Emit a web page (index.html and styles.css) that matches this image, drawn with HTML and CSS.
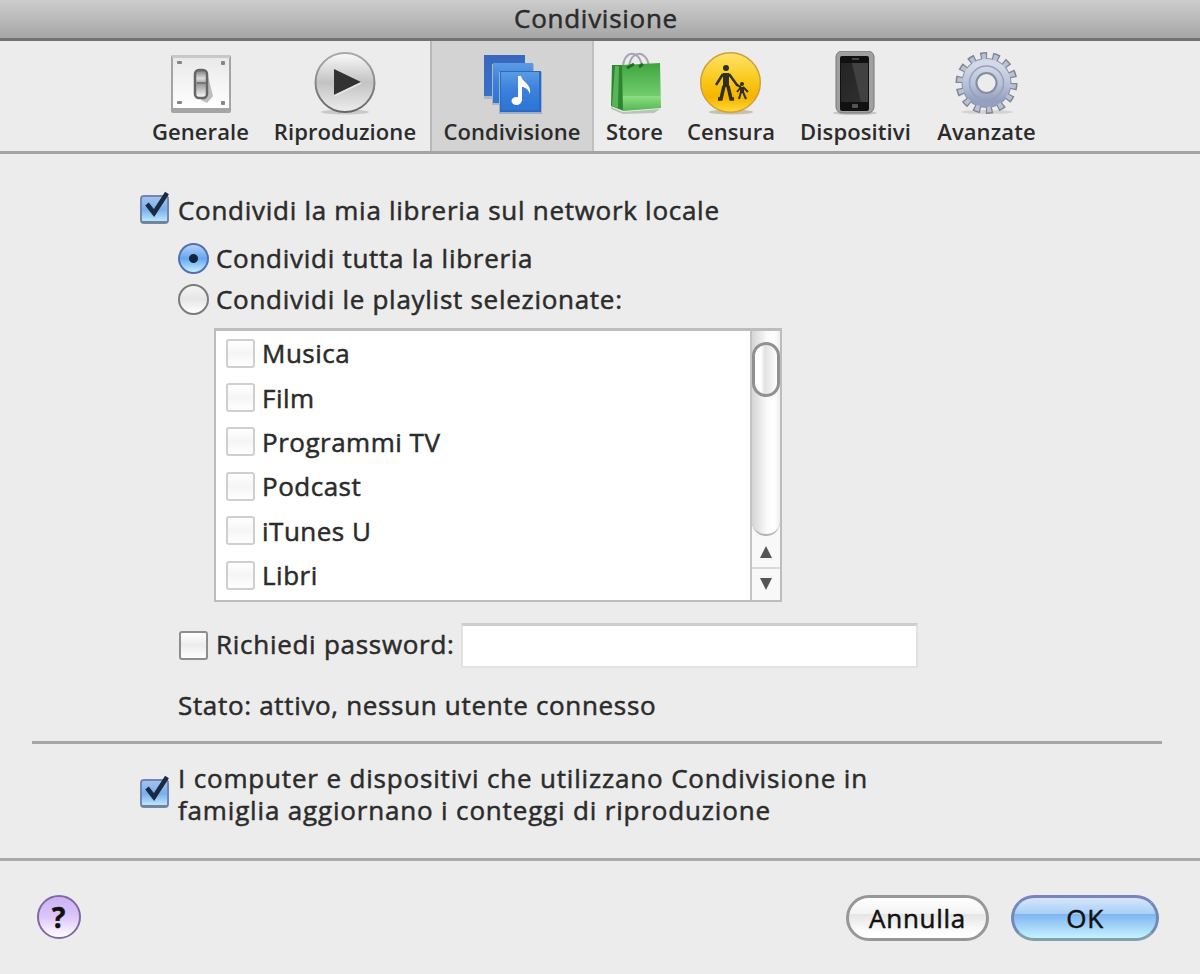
FILE: index.html
```html
<!doctype html>
<html lang="it">
<head>
    <meta charset="utf-8">
    <meta name="viewport" content="width=device-width, initial-scale=1.0">
    <title>Condivisione</title>
    <link rel="stylesheet" href="styles.css">
</head>
<body>
    <header class="titlebar"><span>Condivisione</span></header>

    <nav class="toolbar">
        <div class="tab">
            <svg class="icon" viewBox="0 0 64 64">
                <defs>
                    <linearGradient id="plate" x1="0" y1="0" x2="0" y2="1">
                        <stop offset="0" stop-color="#e9e9e9"/>
                        <stop offset="1" stop-color="#ffffff"/>
                    </linearGradient>
                    <linearGradient id="lever" x1="0" y1="0" x2="0" y2="1">
                        <stop offset="0" stop-color="#777"/>
                        <stop offset=".3" stop-color="#ddd"/>
                        <stop offset=".5" stop-color="#999"/>
                        <stop offset="1" stop-color="#fff"/>
                    </linearGradient>
                </defs>
                <rect x="2" y="4" width="60" height="58" rx="2" fill="#a4a4a4"/>
                <rect x="3" y="4" width="58" height="3" fill="#c8c8c8"/>
                <rect x="4" y="7" width="56" height="50" fill="url(#plate)"/>
                <g fill="#858585">
                    <rect x="8" y="10" width="5" height="3" rx="1"/>
                    <rect x="52" y="10" width="4" height="4" rx="1"/>
                    <rect x="8" y="50" width="5" height="3" rx="1"/>
                    <rect x="52" y="50" width="4" height="4" rx="1"/>
                </g>
                <path d="M32 49l6-28 6 24-6 7z" fill="#bdbdbd"/>
                <rect x="26" y="19" width="12" height="28" rx="4" fill="url(#lever)" stroke="#666" stroke-width="2.5"/>
                <path d="M28 32h9" stroke="#777" stroke-width="2"/>
            </svg>
            <span>Generale</span>
        </div>
        <div class="tab">
            <svg class="icon" viewBox="0 0 64 64">
                <defs>
                    <linearGradient id="ball" x1="0" y1="0" x2="0" y2="1">
                        <stop offset="0" stop-color="#fafafa"/>
                        <stop offset=".5" stop-color="#c3c3c3"/>
                        <stop offset="1" stop-color="#ededed"/>
                    </linearGradient>
                    <linearGradient id="rim" x1="0" y1="0" x2="0" y2="1">
                        <stop offset="0" stop-color="#aaa"/>
                        <stop offset="1" stop-color="#666"/>
                    </linearGradient>
                </defs>
                <ellipse cx="32" cy="61" rx="24" ry="2.5" fill="#c9c9c9"/>
                <circle cx="32" cy="31.5" r="29.5" fill="url(#ball)" stroke="url(#rim)" stroke-width="2"/>
                <path d="M21 18l27 13-27 13z" fill="#333"/>
                <path d="M21 45l27-13" stroke="#e8e8e8" stroke-width="1.5"/>
            </svg>
            <span>Riproduzione</span>
        </div>
        <div class="tab selected">
            <svg class="icon" viewBox="0 0 64 64">
                <defs>
                    <linearGradient id="blue1" x1="0" y1="0" x2="0" y2="1">
                        <stop offset="0" stop-color="#3868bd"/>
                        <stop offset="1" stop-color="#3a70c9"/>
                    </linearGradient>
                    <linearGradient id="blue3" x1="0" y1="0" x2="0" y2="1">
                        <stop offset="0" stop-color="#5c9be4"/>
                        <stop offset=".45" stop-color="#3b82dc"/>
                        <stop offset="1" stop-color="#2c74d6"/>
                    </linearGradient>
                </defs>
                <rect x="4" y="45" width="42" height="3" fill="#b2b5bc"/>
                <rect x="4" y="4" width="41" height="41" fill="url(#blue1)"/>
                <rect x="12" y="13" width="42" height="41" fill="#b2b5bc"/>
                <rect x="13" y="12" width="40" height="40" fill="url(#blue3)"/>
                <rect x="19" y="21" width="43" height="42" fill="#9fafc6"/>
                <rect x="20" y="20" width="41" height="41" fill="#2d69bd"/>
                <rect x="21" y="21" width="38" height="38" fill="url(#blue3)"/>
                <ellipse cx="36.500" cy="50" rx="5" ry="4" fill="#fff"/>
                <path d="M38 50V25h3c1 6 11 8 9 18-2-5-5-7-8-7v14z" fill="#fff"/>
            </svg>
            <span>Condivisione</span>
        </div>
        <div class="tab">
            <svg class="icon" viewBox="0 0 64 64">
                <defs>
                    <linearGradient id="bag" x1="0" y1="0" x2="0" y2="1">
                        <stop offset="0" stop-color="#3fa53f"/>
                        <stop offset=".68" stop-color="#72cc6c"/>
                        <stop offset=".7" stop-color="#8add83"/>
                        <stop offset="1" stop-color="#55b64e"/>
                    </linearGradient>
                </defs>
                <path d="M8 56l12 5 37-3-6 4-31 1-12-5z" fill="#b9c3b8"/>
                <path d="M20 17c0-19 18-19 19 0M26 17c1-19 18-18 20-2" fill="none" stroke="#aaa4b2" stroke-width="2"/>
                <path d="M9 14h12v46L8 55z" fill="#2d862f"/>
                <path d="M12 15l-3 40 6 2 1-42z" fill="#58b458"/>
                <path d="M19 14l38-2 1 45-38 3z" fill="url(#bag)"/>
                <path d="M24 17l7-4M36 16l4-3" stroke="#236a29" stroke-width="3"/>
            </svg>
            <span>Store</span>
        </div>
        <div class="tab">
            <svg class="icon" viewBox="0 0 64 64">
                <defs>
                    <linearGradient id="gold" x1="0" y1="0" x2="0" y2="1">
                        <stop offset="0" stop-color="#ffe36b"/>
                        <stop offset=".45" stop-color="#f9c91c"/>
                        <stop offset=".75" stop-color="#f5b400"/>
                        <stop offset="1" stop-color="#ffdb35"/>
                    </linearGradient>
                </defs>
                <ellipse cx="32" cy="61" rx="22" ry="2.5" fill="#c7c0ae"/>
                <circle cx="31.500" cy="31.500" r="29.8" fill="url(#gold)" stroke="#d0a13a" stroke-width="1.5"/>
                <g fill="none" stroke="#30301c">
                    <circle cx="27" cy="17" r="3" fill="#30301c" stroke="none"/>
                    <path d="M27 22v14" stroke-width="6"/>
                    <path d="M24 23l-7 11M30 23l8 11 4 2" stroke-width="2.5"/>
                    <path d="M25 35l-3 13h-3M29 35l3 13h3" stroke-width="3.5"/>
                    <circle cx="43" cy="33" r="2" fill="#30301c" stroke="none"/>
                    <path d="M43 36v6" stroke-width="4"/>
                    <path d="M42 36l-4 5M44 36l5 5M42 41l-2 7M44 41l3 7" stroke-width="2"/>
                </g>
            </svg>
            <span>Censura</span>
        </div>
        <div class="tab">
            <svg class="icon" viewBox="0 0 64 64">
                <defs>
                    <linearGradient id="screen" x1="0" y1="0" x2="1" y2="1">
                        <stop offset="0" stop-color="#242424"/>
                        <stop offset="1" stop-color="#303030"/>
                    </linearGradient>
                </defs>
                <ellipse cx="31" cy="62" rx="22" ry="2" fill="#c5c5c5"/>
                <rect x="12" y="0" width="38" height="62" rx="6" fill="#a0a0a0" stroke="#777"/>
                <rect x="16" y="5" width="29" height="55" rx="2" fill="#111"/>
                <rect x="17" y="12" width="27" height="39" fill="url(#screen)"/>
                <path d="M28 12h16v39h-7z" fill="#414141"/>
                <rect x="28" y="7" width="7" height="2" fill="#444"/>
                <rect x="28" y="53" width="6" height="4" rx="1" fill="#555"/>
            </svg>
            <span>Dispositivi</span>
        </div>
        <div class="tab">
            <svg class="icon" viewBox="0 0 64 64">
                <defs>
                    <linearGradient id="steel" x1="0" y1="0" x2="0" y2="1">
                        <stop offset="0" stop-color="#d3d9e6"/>
                        <stop offset=".55" stop-color="#b6c1da"/>
                        <stop offset="1" stop-color="#93a0bf"/>
                    </linearGradient>
                </defs>
                <ellipse cx="32" cy="61" rx="26" ry="2" fill="#d3d3d3"/>
                <g fill="none">
                    <circle cx="31.500" cy="32" r="27" stroke="#7f8595" stroke-width="8" pathLength="28" stroke-dasharray="1.1 .9"/>
                    <circle cx="31.500" cy="32" r="18" stroke="#8b92a4" stroke-width="14"/>
                    <circle cx="31.500" cy="32" r="26" stroke="#b9c1d3" stroke-width="7" pathLength="28" stroke-dasharray=".7 1.3" stroke-dashoffset="-.2"/>
                    <circle cx="31.500" cy="32" r="17.5" stroke="url(#steel)" stroke-width="13"/>
                    <circle cx="31.500" cy="32" r="17" stroke="#98a1b8" stroke-width="1.5"/>
                </g>
                <circle cx="31.500" cy="32" r="10" fill="#ececec" stroke="#858c9e" stroke-width="2"/>
            </svg>
            <span>Avanzate</span>
        </div>
    </nav>

    <main class="panel">
        <div class="row share">
            <svg class="check" viewBox="0 0 34 34">
                <defs>
                    <linearGradient id="aqua" x1="0" y1="0" x2="0" y2="1">
                        <stop offset="0" stop-color="#a9c4ee"/>
                        <stop offset=".5" stop-color="#78aeee"/>
                        <stop offset="1" stop-color="#c6f0ff"/>
                    </linearGradient>
                </defs>
                <rect x="3" y="6" width="27" height="27" rx="3" fill="url(#aqua)" stroke="#7286b4" stroke-width="2"/>
                <path d="M3 32h27" stroke="#75838f" stroke-width="2"/>
                <path d="M9 14l7 9L29 3" fill="none" stroke="#1c2940" stroke-width="4.5"/>
            </svg>
            <span>Condividi la mia libreria sul network locale</span>
        </div>
        <div class="row all">
            <span class="radio on"></span>
            <span>Condividi tutta la libreria</span>
        </div>
        <div class="row some">
            <span class="radio"></span>
            <span>Condividi le playlist selezionate:</span>
        </div>

        <div class="playlists">
            <ul>
                <li><span class="box"></span>Musica</li>
                <li><span class="box"></span>Film</li>
                <li><span class="box"></span>Programmi TV</li>
                <li><span class="box"></span>Podcast</li>
                <li><span class="box"></span>iTunes U</li>
                <li><span class="box"></span>Libri</li>
            </ul>
            <div class="scrollbar">
                <div class="track"><div class="thumb"></div></div>
                <div class="arrow"><svg viewBox="0 0 14 12"><path d="M7 0l6 12H1z"/></svg></div>
                <div class="arrow down"><svg viewBox="0 0 14 12"><path d="M7 12L1 0h12z"/></svg></div>
            </div>
        </div>

        <div class="row password">
            <span class="box dark"></span>
            <label for="password">Richiedi password:</label>
            <input id="password" type="password">
        </div>
        <p class="status">Stato: attivo, nessun utente connesso</p>
        <hr>
        <div class="row counts">
            <svg class="check" viewBox="0 0 34 34">
                <rect x="3" y="6" width="27" height="27" rx="3" fill="url(#aqua)" stroke="#7286b4" stroke-width="2"/>
                <path d="M3 32h27" stroke="#75838f" stroke-width="2"/>
                <path d="M9 14l7 9L29 3" fill="none" stroke="#1c2940" stroke-width="4.5"/>
            </svg>
            <p>I computer e dispositivi che utilizzano Condivisione in<br>famiglia aggiornano i conteggi di riproduzione</p>
        </div>
    </main>

    <footer class="buttons">
        <button class="help">?</button>
        <button class="pill">Annulla</button>
        <button class="pill ok">OK</button>
    </footer>
</body>
</html>
```
FILE: styles.css
```css
* {
    box-sizing: border-box;
}

body {
    margin: 0;
    height: 974px;
    overflow: hidden;
    background: #ececec;
    color: #2b2b2b;
    font-family: "Open Sans", "Noto Sans", sans-serif;
    font-size: 26px;
    letter-spacing: 0.72px;
    -webkit-text-stroke: 0.5px;
    white-space: nowrap;
}

p, ul {
    margin: 0;
    padding: 0;
}

/* Title bar */
.titlebar {
    height: 41px;
    padding-right: 8px;
    line-height: 37px;
    text-align: center;
    background: linear-gradient(#cdcdcd, #a6a6a6);
    border-bottom: 3px solid #727272;
}

/* Toolbar */
.toolbar {
    display: grid;
    grid-template-columns: 119px 170px 164px 81px 112px 137px 125px;
    height: 113px;
    padding-left: 141px;
    border-bottom: 3px solid #a3a3a3;
    font-size: 22px;
    font-weight: 600;
    letter-spacing: 0.1px;
    -webkit-text-stroke: 0;
}

.tab {
    display: flex;
    flex-direction: column;
    align-items: center;
    padding-top: 10px;
}

.tab.selected {
    background: #d3d3d3;
    border-left: 2px solid #b8b8b8;
    border-right: 2px solid #c0c0c0;
}

.icon {
    width: 64px;
    height: 64px;
}

.tab span {
    line-height: 30px;
    margin-top: 1px;
}

/* Settings */
.panel {
    height: 704px;
    padding-top: 36px;
}

.row {
    display: flex;
    align-items: center;
}

.share {
    height: 40px;
    padding-left: 138px;
}

.check {
    width: 34px;
    height: 34px;
    margin: -6px 6px 0 0;
    flex: none;
}

.all, .some {
    height: 41px;
    padding-left: 178px;
}

.all {
    margin-top: 7px;
}

.radio {
    width: 31px;
    height: 31px;
    margin: 2px 7px 0 0;
    border: 2px solid #7c7c7c;
    border-radius: 50%;
    background: linear-gradient(#f4f4f4, #e6e6e6 50%, #fff);
}

.radio.on {
    border-color: #5370ae;
    background: radial-gradient(circle, #12253f 4px, transparent 5px), linear-gradient(#b3d0f6, #67a6ef 50%, #c4f0ff);
}

.playlists {
    display: flex;
    width: 568px;
    height: 274px;
    margin: 9px 0 0 214px;
    background: #fff;
    border: 2px solid #bdbdbd;
    border-top-width: 3px;
}

.playlists ul {
    flex: 1;
    list-style: none;
    padding-left: 10px;
    letter-spacing: 0.5px;
}

.playlists li {
    display: flex;
    align-items: center;
    height: 44.4px;
}

.box {
    width: 29px;
    height: 29px;
    margin-right: 7px;
    border: 2px solid #cfcfcf;
    border-radius: 3px;
    background: linear-gradient(#fff, #f5f5f5 50%, #fff);
}

.box.dark {
    margin-right: 8px;
    border-color: #8e8e8e;
    background: linear-gradient(#fff, #ececec 50%, #fff);
}

.scrollbar {
    display: flex;
    flex-direction: column;
    width: 30px;
    border-left: 2px solid #c4c4c4;
    background: #f8f8f8;
}

.track {
    height: 205px;
    padding-top: 11px;
    border-radius: 0 0 14px 14px;
    background: linear-gradient(90deg, #d5d5d5, #fbfbfb 55%, #fff 80%, #eee);
    border-bottom: 2px solid #b5b5b5;
}

.thumb {
    height: 55px;
    border: 3px solid #919191;
    border-radius: 14px;
    background: linear-gradient(90deg, #fff 25%, #e2e2e2 45%, #fff);
}

.arrow {
    display: flex;
    align-items: center;
    justify-content: center;
    height: 31px;
}

.arrow.down {
    border-top: 2px solid #d8d8d8;
}

.arrow svg {
    width: 14px;
    height: 12px;
    fill: #555;
}

.password {
    height: 46px;
    margin-top: 20px;
    padding-left: 179px;
}

.password label {
    width: 245px;
    margin-top: -2px;
}

.password input {
    width: 457px;
    height: 45px;
    border: 2px solid #e2e2e2;
    border-top: 3px solid #cdcdcd;
    background: #fff;
    outline: none;
}

.status {
    height: 73px;
    padding: 19px 0 0 178px;
    line-height: 36px;
    letter-spacing: 0.67px;
}

hr {
    height: 3px;
    margin: 0 38px 0 32px;
    border: 0;
    background: #a6a6a6;
}

.counts {
    height: 100px;
    padding-left: 138px;
    line-height: 32px;
    letter-spacing: 0.83px;
}

/* Bottom buttons */
.buttons {
    display: flex;
    height: 116px;
    padding: 34px 41px 0 37px;
    border-top: 3px solid #a9a9a9;
}

button {
    padding: 0;
    font: inherit;
    letter-spacing: 0.7px;
    color: #111;
}

.help {
    width: 44px;
    height: 44px;
    margin-right: auto;
    border: 2px solid #8069a4;
    border-radius: 50%;
    background: linear-gradient(#cbb2f2, #dcc6fb 50%, #fff);
    font-size: 28px;
    font-weight: 700;
    line-height: 38px;
}

.pill {
    width: 143px;
    height: 46px;
    border: 3px solid #979797;
    border-radius: 23px;
    background: linear-gradient(#fff, #f3f3f3 40%, #e6e6e6 41%, #fff 90%);
    line-height: 36px;
}

.pill.ok {
    width: 148px;
    margin-left: 22px;
    border-color: #7b83bf #7089b5 #82a0ac;
    background: linear-gradient(#d5e6fb, #a9cff8 40%, #7fb5f2 41%, #c6f2ff);
}
```
